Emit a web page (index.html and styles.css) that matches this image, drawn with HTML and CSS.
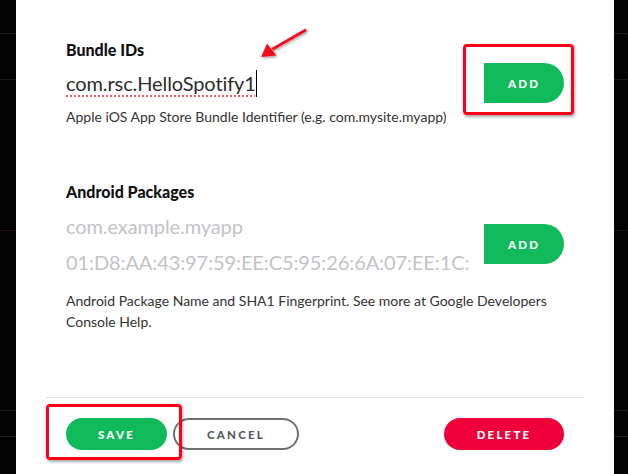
FILE: index.html
```html
<!DOCTYPE html>
<html lang="en">
<head>
<meta charset="utf-8">
<title>App settings</title>
<link rel="stylesheet" href="styles.css">
</head>
<body>
<div class="page">
  <div class="strip"></div>
  <div class="modal">
    <div class="content">
      <section class="group">
        <h2 class="label">Bundle IDs</h2>
        <div class="row row-single">
          <div class="fields">
            <div class="field filled"><span class="spell">com.rsc.HelloSpotify1</span><span class="caret"></span></div>
          </div>
          <button class="btn btn-green btn-add">ADD</button>
        </div>
        <p class="help">Apple iOS App Store Bundle Identifier (e.g. com.mysite.myapp)</p>
      </section>
      <section class="group group-android">
        <h2 class="label">Android Packages</h2>
        <div class="row row-double">
          <div class="fields">
            <div class="field placeholder">com.example.myapp</div>
            <div class="field placeholder">01:D8:AA:43:97:59:EE:C5:95:26:6A:07:EE:1C:</div>
          </div>
          <button class="btn btn-green btn-add">ADD</button>
        </div>
        <p class="help help-two">Android Package Name and SHA1 Fingerprint. See more at Google Developers Console Help.</p>
      </section>
    </div>
    <div class="footer">
      <button class="btn btn-green btn-save">SAVE</button>
      <button class="btn btn-outline btn-cancel">CANCEL</button>
      <button class="btn btn-red btn-delete">DELETE</button>
    </div>

    <div class="mark mark-add"></div>
    <div class="mark mark-save"></div>
    <svg class="arrow" width="60" height="40" viewBox="0 0 60 40" aria-hidden="true">
      <defs>
        <filter id="sh" x="-20%" y="-20%" width="140%" height="160%">
          <feDropShadow dx="1" dy="1.5" stdDeviation="1" flood-color="#000" flood-opacity="0.35"/>
        </filter>
      </defs>
      <g filter="url(#sh)" fill="#f3101e">
        <path d="M54.5 2.5 L56 5 L22 24.5 L20.5 22 Z"/>
        <path d="M10 31 L16 17.5 L25.5 29.5 Z"/>
      </g>
    </svg>
  </div>
  <div class="strip"></div>
</div>
</body>
</html>
```

FILE: styles.css
```css
* { box-sizing: border-box; }

html, body {
  margin: 0;
  padding: 0;
  background: #000;
}

body {
  font-family: Lato, "Noto Sans", "Liberation Sans", sans-serif;
  color: #222;
}

.page {
  display: flex;
  width: 628px;
  height: 474px;
  overflow: hidden;
}

.strip {
  flex: 0 0 16px;
  background:
    linear-gradient(#1b1b1b, #1b1b1b) 0 33px / 100% 1px no-repeat,
    linear-gradient(#1b1b1b, #1b1b1b) 0 79px / 100% 1px no-repeat,
    linear-gradient(#1f0f18, #1f0f18) 0 230px / 100% 1px no-repeat,
    linear-gradient(#1b1b1b, #1b1b1b) 0 410px / 100% 1px no-repeat,
    linear-gradient(#1b1b1b, #1b1b1b) 0 436px / 100% 1px no-repeat,
    #030303;
}

.strip:last-child { flex-basis: 14px; }

.modal {
  position: relative;
  flex: 0 0 598px;
  background: #fff;
  padding: 0 30px;
  display: flex;
  flex-direction: column;
}

.content {
  padding: 40px 20px 0;
  height: 397px;
}

.label {
  margin: 0;
  font-size: 16px;
  line-height: 20px;
  font-weight: 900;
  color: #111;
}

.row {
  display: flex;
  align-items: center;
  gap: 12px;
}

.row-single { margin-top: 3px; }
.row-double { margin-top: 6px; }

.fields {
  flex: 1;
  display: flex;
  flex-direction: column;
}

.field {
  height: 36px;
  line-height: 36px;
  font-size: 20px;
  white-space: nowrap;
  letter-spacing: -0.1px;
}

.filled { color: #2b2b2b; display: flex; align-items: center; }

.spell {
  text-decoration: underline dotted #f05a6a;
  text-decoration-thickness: 2px;
  text-underline-offset: 4px;
}

.caret {
  display: inline-block;
  width: 1px;
  height: 27px;
  background: #000;
}

.placeholder { color: #c3c3c7; }

.help {
  margin: 4px 0 0;
  font-size: 14px;
  line-height: 20px;
  color: #333;
}

.help-two {
  margin-top: 10px;
  line-height: 21px;
}

.group-android { margin-top: 55px; }

.btn {
  border: 0;
  font-family: inherit;
  font-weight: 900;
  font-size: 11.5px;
  letter-spacing: 2.2px;
  color: #fff;
  height: 32px;
  border-radius: 16px;
  padding: 0;
  cursor: pointer;
}

.btn-green { background: #10ba5a; }
.btn-red { background: #f0003a; }

.btn-add {
  flex: 0 0 80px;
  height: 40px;
  border-radius: 0 20px 20px 0;
}

.footer {
  border-top: 1px solid #e2e2e2;
  padding: 20px 20px 0;
  display: flex;
  align-items: flex-start;
}

.btn-save { width: 101px; }

.btn-cancel {
  width: 126px;
  margin-left: 6px;
  background: #fff;
  color: #555a5f;
  border: 2px solid #6e7176;
}

.btn-delete {
  width: 120px;
  margin-left: auto;
}

.mark {
  position: absolute;
  border: 3px solid #ff0019;
  border-radius: 4px;
  box-shadow: 1px 2px 3px rgba(0, 0, 0, 0.35);
}

.mark-add {
  left: 447px;
  top: 44px;
  width: 111px;
  height: 71px;
}

.mark-save {
  left: 30px;
  top: 404px;
  width: 136px;
  height: 56px;
}

.arrow {
  position: absolute;
  left: 235px;
  top: 26px;
}
```
